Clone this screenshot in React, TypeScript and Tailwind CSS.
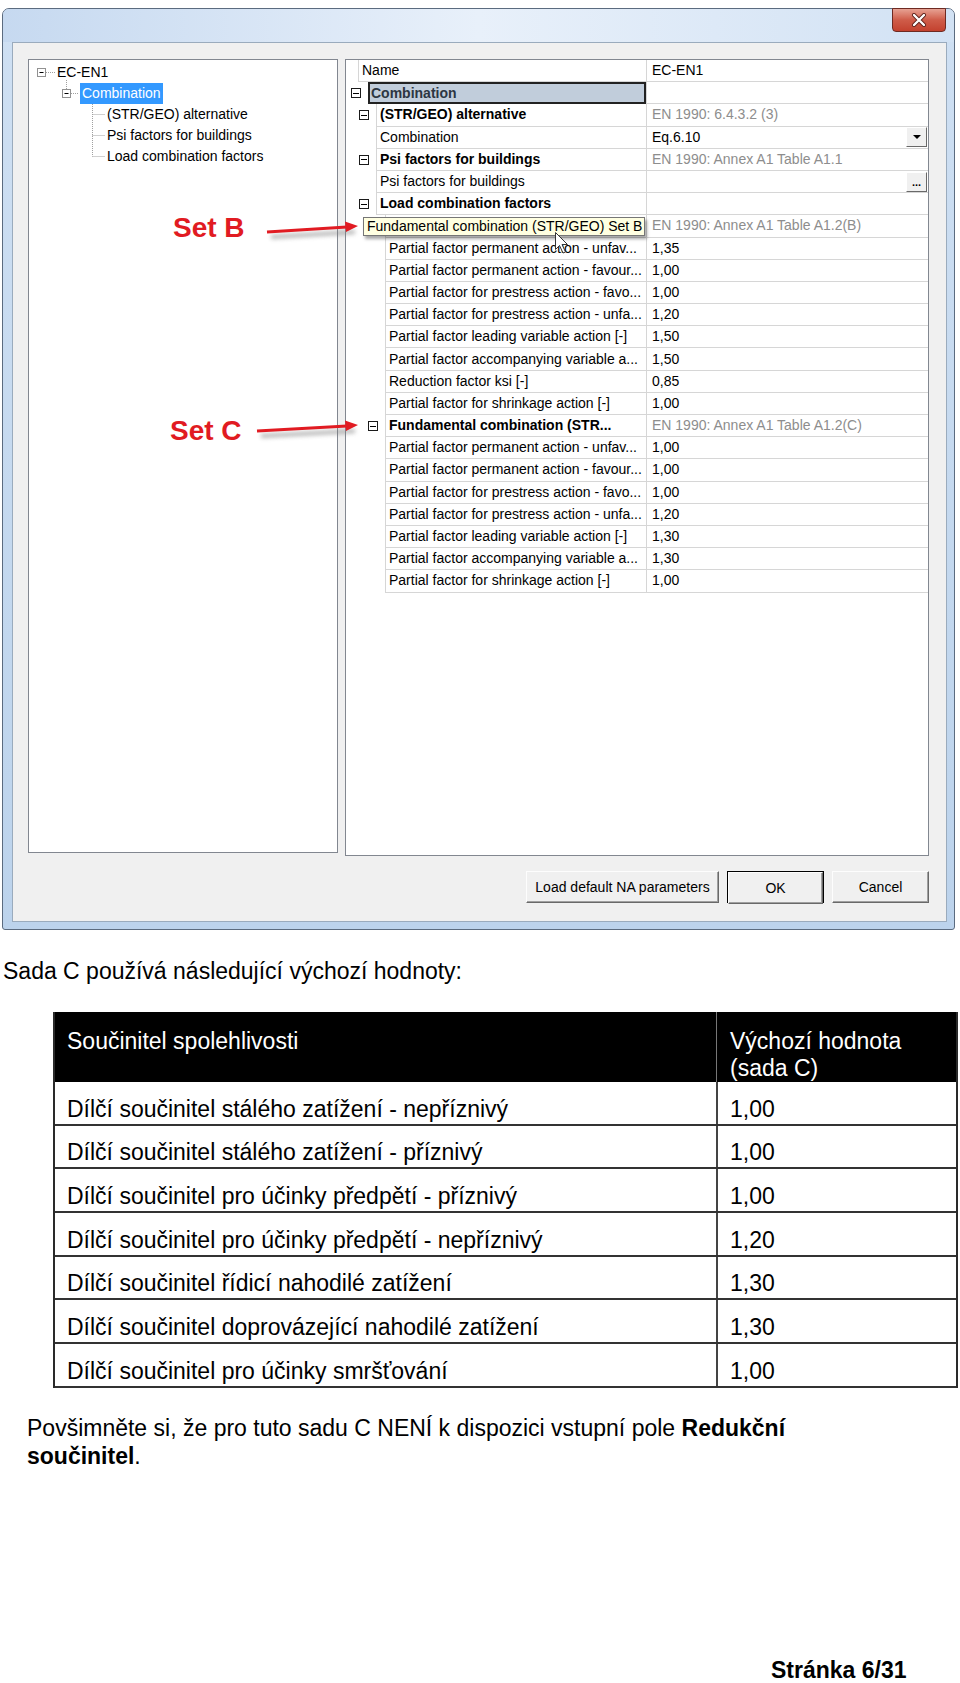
import React from "react";

type GridRow = {
  indent: 12 | 22 | 30 | 39;
  label: string;
  value?: string;
  gray?: boolean;
  bold?: boolean;
  minus?: boolean;
  selected?: boolean;
  btn?: "drop" | "dots";
};

const gutter = { 12: "w-[12px]", 22: "w-[22px]", 30: "w-[30px]", 39: "w-[39px]" };
const nameW = { 12: "w-[288px]", 22: "w-[278px]", 30: "w-[270px]", 39: "w-[261px]" };

const rows: GridRow[] = [
  { indent: 12, label: "Name", value: "EC-EN1" },
  { indent: 22, label: "Combination", minus: true, bold: true, selected: true },
  { indent: 30, label: "(STR/GEO) alternative", minus: true, bold: true, value: "EN 1990: 6.4.3.2 (3)", gray: true },
  { indent: 30, label: "Combination", value: "Eq.6.10", btn: "drop" },
  { indent: 30, label: "Psi factors for buildings", minus: true, bold: true, value: "EN 1990: Annex A1 Table A1.1", gray: true },
  { indent: 30, label: "Psi factors for buildings", btn: "dots" },
  { indent: 30, label: "Load combination factors", minus: true, bold: true },
  { indent: 39, label: "", value: "EN 1990: Annex A1 Table A1.2(B)", gray: true },
  { indent: 39, label: "Partial factor permanent action - unfav...", value: "1,35" },
  { indent: 39, label: "Partial factor permanent action - favour...", value: "1,00" },
  { indent: 39, label: "Partial factor for prestress action - favo...", value: "1,00" },
  { indent: 39, label: "Partial factor for prestress action - unfa...", value: "1,20" },
  { indent: 39, label: "Partial factor leading variable action [-]", value: "1,50" },
  { indent: 39, label: "Partial factor accompanying variable a...", value: "1,50" },
  { indent: 39, label: "Reduction factor ksi [-]", value: "0,85" },
  { indent: 39, label: "Partial factor for shrinkage action [-]", value: "1,00" },
  { indent: 39, label: "Fundamental combination (STR...", minus: true, bold: true, value: "EN 1990: Annex A1 Table A1.2(C)", gray: true },
  { indent: 39, label: "Partial factor permanent action - unfav...", value: "1,00" },
  { indent: 39, label: "Partial factor permanent action - favour...", value: "1,00" },
  { indent: 39, label: "Partial factor for prestress action - favo...", value: "1,00" },
  { indent: 39, label: "Partial factor for prestress action - unfa...", value: "1,20" },
  { indent: 39, label: "Partial factor leading variable action [-]", value: "1,30" },
  { indent: 39, label: "Partial factor accompanying variable a...", value: "1,30" },
  { indent: 39, label: "Partial factor for shrinkage action [-]", value: "1,00" },
];

const tableRows = [
  ["Dílčí součinitel stálého zatížení - nepříznivý", "1,00"],
  ["Dílčí součinitel stálého zatížení - příznivý", "1,00"],
  ["Dílčí součinitel pro účinky předpětí - příznivý", "1,00"],
  ["Dílčí součinitel pro účinky předpětí - nepříznivý", "1,20"],
  ["Dílčí součinitel řídicí nahodilé zatížení", "1,30"],
  ["Dílčí součinitel doprovázející nahodilé zatížení", "1,30"],
  ["Dílčí součinitel pro účinky smršťování", "1,00"],
];

const MinusBox = () => (
  <span className="flex h-[10px] w-[10px] items-center justify-center border border-[#1a1a1a] bg-white">
    <span className="h-px w-[6px] bg-black" />
  </span>
);

const Tree = () => (
  <div className="relative h-[794px] w-[310px] border border-[#828790] bg-white pt-[2px] text-[14px]">
    <svg className="pointer-events-none absolute left-0 top-0" width="308" height="120">
      <g stroke="#a0a0a0" strokeDasharray="1 1" fill="none">
        <path d="M17 12.5H26" />
        <path d="M37.5 20V29" />
        <path d="M42 33.5H50" />
        <path d="M63.5 44V96.5" />
        <path d="M63.5 54.5H76M63.5 75.5H76M63.5 96.5H76" />
      </g>
      <rect x="8.5" y="8.5" width="8" height="8" fill="#fff" stroke="#919191" />
      <path d="M10.5 12.5H14.5" stroke="#000" />
      <rect x="33.5" y="29.5" width="8" height="8" fill="#fff" stroke="#919191" />
      <path d="M35.5 33.5H39.5" stroke="#000" />
    </svg>
    <div className="h-[21px] pl-[28px] leading-[21px]">EC-EN1</div>
    <div className="h-[21px] pl-[51px] leading-[21px]">
      <span className="inline-block h-[21px] bg-[#3399ff] px-[2px] text-white">Combination</span>
    </div>
    <div className="h-[21px] pl-[78px] leading-[21px]">(STR/GEO) alternative</div>
    <div className="h-[21px] pl-[78px] leading-[21px]">Psi factors for buildings</div>
    <div className="h-[21px] pl-[78px] leading-[21px]">Load combination factors</div>
  </div>
);

const Grid = () => (
  <div className="relative h-[797px] w-[584px] border border-[#828790] bg-white text-[14px]">
    {rows.map((r, i) => (
      <div key={i} className="flex h-[22.2px]">
        <div className={`${gutter[r.indent]} flex items-center justify-end pr-[7px]`}>
          {r.minus && <MinusBox />}
        </div>
        {r.selected ? (
          <div className={`${nameW[r.indent]} flex items-center overflow-hidden whitespace-nowrap border-2 border-[#222] bg-[#c1cddb] pl-[1px] font-bold text-[#2c3642]`}>
            {r.label}
          </div>
        ) : (
          <div
            className={`${nameW[r.indent]} flex items-center overflow-hidden whitespace-nowrap border-b border-l border-[#d6d6d6] pl-[3px] ${
              r.bold ? "font-bold" : ""
            }`}
          >
            {r.label}
          </div>
        )}
        <div className="flex flex-1 items-center justify-between border-b border-l border-[#d6d6d6] pl-[5px] pr-px">
          <span className={`whitespace-nowrap ${r.gray ? "text-[#8d8d8d]" : ""}`}>{r.value}</span>
          {r.btn === "drop" && (
            <span className="flex h-[20px] w-[21px] items-center justify-center border border-b-[#696969] border-l-white border-r-[#696969] border-t-white bg-[#f0f0f0]">
              <svg width="8" height="4" viewBox="0 0 8 4">
                <path d="M0 0H8L4 4Z" fill="#000" />
              </svg>
            </span>
          )}
          {r.btn === "dots" && (
            <span className="flex h-[20px] w-[21px] items-end justify-center border border-b-[#696969] border-l-white border-r-[#696969] border-t-white bg-[#f0f0f0] pb-[3px] text-[11px] font-bold leading-none">
              ...
            </span>
          )}
        </div>
      </div>
    ))}

    {/* tooltip over Set B row */}
    <div className="absolute left-[17px] top-[157px] h-[19px] w-[282px] whitespace-nowrap border border-[#767676] bg-[#ffffe1] pl-[3px] leading-[17px] shadow-[2px_3px_3px_rgba(0,0,0,0.35)]">
      Fundamental combination (STR/GEO) Set B
    </div>
  </div>
);

const classicBtn =
  "flex h-[32px] items-center justify-center border border-b-[#696969] border-l-[#fdfdfd] border-r-[#696969] border-t-[#fdfdfd] bg-[#f0f0f0] text-[14px] shadow-[inset_-1px_-1px_0_#a0a0a0]";

const Dialog = () => (
  <div className="relative ml-[2px] mt-[8px] flex h-[922px] w-[953px] flex-col rounded-t-[7px] rounded-b-[3px] border border-[#5b6b7f] bg-gradient-to-b from-[#cfe0f3] to-[#bcd3ec]">
    <div className="relative h-[33px] rounded-t-[6px] bg-gradient-to-r from-[#c6d9f0] via-[#e8f0fa] to-[#d2e2f4]">
      <div className="absolute right-[8px] top-[-1px] flex h-[24px] w-[54px] items-center justify-center rounded-b-[4px] border border-[#6e2a22] bg-gradient-to-b from-[#e6a193] via-[#cf5c49] to-[#c3412e]">
        <svg width="16" height="14" viewBox="0 0 16 14">
          <path d="M3 2L13 12M13 2L3 12" stroke="#5a1f18" strokeWidth="4" strokeLinecap="round" />
          <path d="M3 2L13 12M13 2L3 12" stroke="#fff" strokeWidth="2.4" strokeLinecap="round" />
        </svg>
      </div>
    </div>
    <div className="flex flex-1 pb-[7px] pl-[9px] pr-[7px]">
      <div className="flex flex-1 flex-col border border-[#9aabbd] bg-[#f0f0f0] pl-[15px] pr-[17px] pt-[16px]">
        <div className="flex items-start gap-[7px]">
          <Tree />
          <Grid />
        </div>
        <div className="mt-[15px] flex justify-end gap-[8px]">
          <div className={`${classicBtn} w-[193px]`}>Load default NA parameters</div>
          <div className="flex h-[32px] w-[97px] border border-black">
            <div className={`${classicBtn} h-[30px] flex-1`}>OK</div>
          </div>
          <div className={`${classicBtn} w-[97px]`}>Cancel</div>
        </div>
      </div>
    </div>

    {/* annotations */}
    <div className="absolute left-[170px] top-[205px] text-[28px] font-bold leading-[28px] text-[#e11b22]">Set B</div>
    <div className="absolute left-[167px] top-[408px] text-[28px] font-bold leading-[28px] text-[#e11b22]">Set C</div>
    <svg className="pointer-events-none absolute left-0 top-0" width="953" height="922">
      <defs>
        <filter id="blur" x="-20%" y="-200%" width="140%" height="500%">
          <feGaussianBlur stdDeviation="2" />
        </filter>
      </defs>
      <g filter="url(#blur)" opacity="0.55">
        <path d="M268 228L352 223" stroke="#7a7a7a" strokeWidth="4" />
        <path d="M258 427L352 422" stroke="#7a7a7a" strokeWidth="4" />
      </g>
      <path d="M264 223L344 218" stroke="#e11b22" strokeWidth="3" />
      <path d="M355 217L342 212.5L343 223Z" fill="#e11b22" />
      <path d="M254 422L344 417" stroke="#e11b22" strokeWidth="3" />
      <path d="M355 416L342 411.5L343 422Z" fill="#e11b22" />
      {/* mouse pointer */}
      <path
        d="M552.5 223.5V240.5L556.5 236.5L560 244L562.5 243L559 235.5H564.5Z"
        fill="#fff"
        stroke="#333"
        strokeWidth="1"
      />
    </svg>
  </div>
);

const Table = () => (
  <div className="ml-[53px] mt-[28px] w-[905px] border-x-2 border-[#2a2a2a] text-[23px]">
    <div className="flex h-[70px] bg-black text-white">
      <div className="w-[661px] pl-[12px] pt-[16px] leading-[27px]">Součinitel spolehlivosti</div>
      <div className="flex-1 border-l border-[#777] pl-[13px] pt-[16px] leading-[27px]">
        Výchozí hodnota
        <br />
        (sada C)
      </div>
    </div>
    {tableRows.map(([label, val]) => (
      <div key={label} className="flex h-[43.7px] border-b-2 border-[#333]">
        <div className="flex w-[661px] items-end pb-[2px] pl-[12px] leading-[26px]">{label}</div>
        <div className="flex flex-1 items-end border-l-2 border-[#444] pb-[2px] pl-[12px] leading-[26px]">{val}</div>
      </div>
    ))}
  </div>
);

export default function App() {
  return (
    <div className="flex h-[1683px] w-[960px] flex-col overflow-hidden bg-white font-['Liberation_Sans',Arial,sans-serif] text-black">
      <Dialog />
      <p className="mt-[28px] pl-[3px] text-[23px] leading-[26px]">Sada C používá následující výchozí hodnoty:</p>
      <Table />
      <p className="mt-[26px] w-[830px] pl-[27px] text-[23px] leading-[28px]">
        Povšimněte si, že pro tuto sadu C NENÍ k dispozici vstupní pole <b>Redukční</b> <b>součinitel</b>.
      </p>
      <div className="mt-auto pl-[771px] text-[23px] font-bold leading-[26px]">Stránka 6/31</div>
    </div>
  );
}
